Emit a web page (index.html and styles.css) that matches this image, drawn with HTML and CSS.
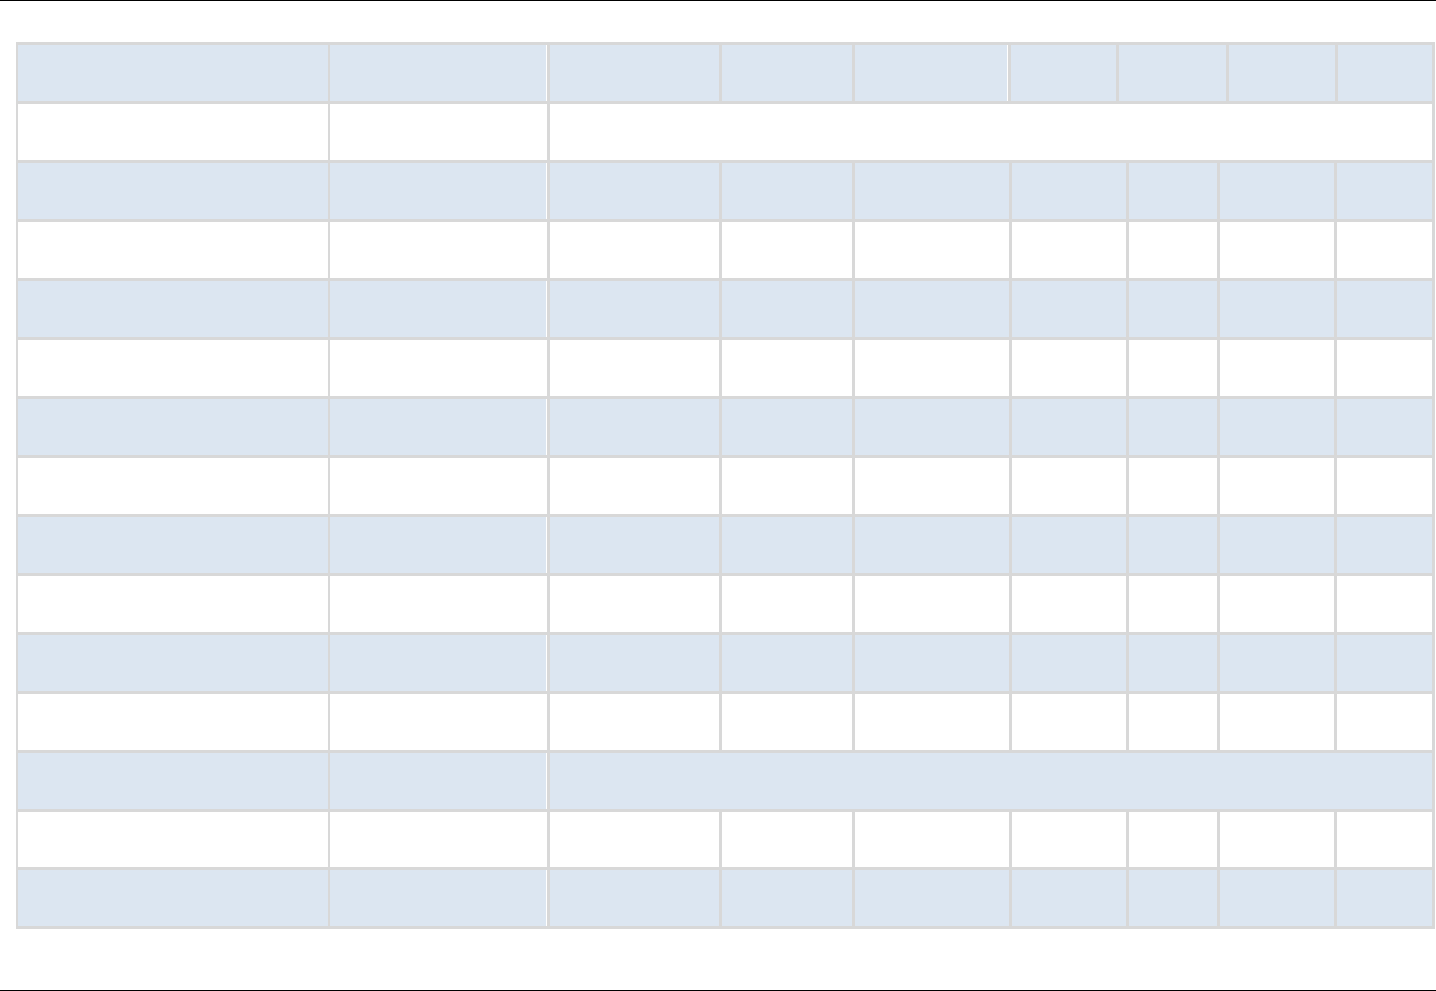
FILE: index.html
```html
<!DOCTYPE html>
<html lang="en">
<head>
<meta charset="utf-8">
<title>Sheet</title>
<link rel="stylesheet" href="styles.css">
</head>
<body>
<div class="page">
  <div class="sheet">
    <div class="row head blue">
      <div class="cell first"></div><div class="cell sep"></div><div class="cell"></div><div class="cell"></div><div class="cell sep"></div><div class="cell"></div><div class="cell"></div><div class="cell"></div><div class="cell"></div>
    </div>
    <div class="row">
      <div class="cell first"></div><div class="cell sep"></div><div class="cell wide"></div>
    </div>
    <div class="row blue">
      <div class="cell first"></div><div class="cell sep"></div><div class="cell"></div><div class="cell"></div><div class="cell"></div><div class="cell"></div><div class="cell"></div><div class="cell"></div><div class="cell"></div>
    </div>
    <div class="row">
      <div class="cell first"></div><div class="cell sep"></div><div class="cell"></div><div class="cell"></div><div class="cell"></div><div class="cell"></div><div class="cell"></div><div class="cell"></div><div class="cell"></div>
    </div>
    <div class="row blue">
      <div class="cell first"></div><div class="cell sep"></div><div class="cell"></div><div class="cell"></div><div class="cell"></div><div class="cell"></div><div class="cell"></div><div class="cell"></div><div class="cell"></div>
    </div>
    <div class="row">
      <div class="cell first"></div><div class="cell sep"></div><div class="cell"></div><div class="cell"></div><div class="cell"></div><div class="cell"></div><div class="cell"></div><div class="cell"></div><div class="cell"></div>
    </div>
    <div class="row blue">
      <div class="cell first"></div><div class="cell sep"></div><div class="cell"></div><div class="cell"></div><div class="cell"></div><div class="cell"></div><div class="cell"></div><div class="cell"></div><div class="cell"></div>
    </div>
    <div class="row">
      <div class="cell first"></div><div class="cell sep"></div><div class="cell"></div><div class="cell"></div><div class="cell"></div><div class="cell"></div><div class="cell"></div><div class="cell"></div><div class="cell"></div>
    </div>
    <div class="row blue">
      <div class="cell first"></div><div class="cell sep"></div><div class="cell"></div><div class="cell"></div><div class="cell"></div><div class="cell"></div><div class="cell"></div><div class="cell"></div><div class="cell"></div>
    </div>
    <div class="row">
      <div class="cell first"></div><div class="cell sep"></div><div class="cell"></div><div class="cell"></div><div class="cell"></div><div class="cell"></div><div class="cell"></div><div class="cell"></div><div class="cell"></div>
    </div>
    <div class="row blue">
      <div class="cell first"></div><div class="cell sep"></div><div class="cell"></div><div class="cell"></div><div class="cell"></div><div class="cell"></div><div class="cell"></div><div class="cell"></div><div class="cell"></div>
    </div>
    <div class="row">
      <div class="cell first"></div><div class="cell sep"></div><div class="cell"></div><div class="cell"></div><div class="cell"></div><div class="cell"></div><div class="cell"></div><div class="cell"></div><div class="cell"></div>
    </div>
    <div class="row blue">
      <div class="cell first"></div><div class="cell sep"></div><div class="cell wide"></div>
    </div>
    <div class="row short">
      <div class="cell first"></div><div class="cell sep"></div><div class="cell"></div><div class="cell"></div><div class="cell"></div><div class="cell"></div><div class="cell"></div><div class="cell"></div><div class="cell"></div>
    </div>
    <div class="row blue">
      <div class="cell first"></div><div class="cell sep"></div><div class="cell"></div><div class="cell"></div><div class="cell"></div><div class="cell"></div><div class="cell"></div><div class="cell"></div><div class="cell"></div>
    </div>
  </div>
</div>
</body>
</html>
```

FILE: styles.css
```css
html, body {
  margin: 0;
  padding: 0;
  overflow: hidden;
  background: #ffffff;
  font-family: "Liberation Sans", Arial, sans-serif;
}

.page {
  box-sizing: border-box;
  height: 991px;
  border-top: 1px solid #000000;
  border-bottom: 1px solid #000000;
  padding: 41px 0 0 16px;
}

.sheet {
  width: 1417px;
  border-left: 2px solid #d8d8d8;
  border-top: 3px solid #d8d8d8;
}

.row {
  display: grid;
  grid-template-columns: 312px 220px 172px 133px 157px 117px 91px 117px 98px;
  height: 59px;
  background: #ffffff;
}

.row.head {
  grid-template-columns: 312px 220px 172px 133px 156px 108px 110px 109px 97px;
}

.row.blue {
  background: #dce6f1;
}

.row.short {
  height: 58px;
}

.cell {
  box-sizing: border-box;
  border-right: 3px solid #d8d8d8;
  border-bottom: 3px solid #d8d8d8;
}

.cell.first {
  border-right-width: 2px;
}

.cell.sep {
  box-shadow: inset -1px 0 0 #ffffff;
}

.cell.wide {
  grid-column: span 7;
}
```
